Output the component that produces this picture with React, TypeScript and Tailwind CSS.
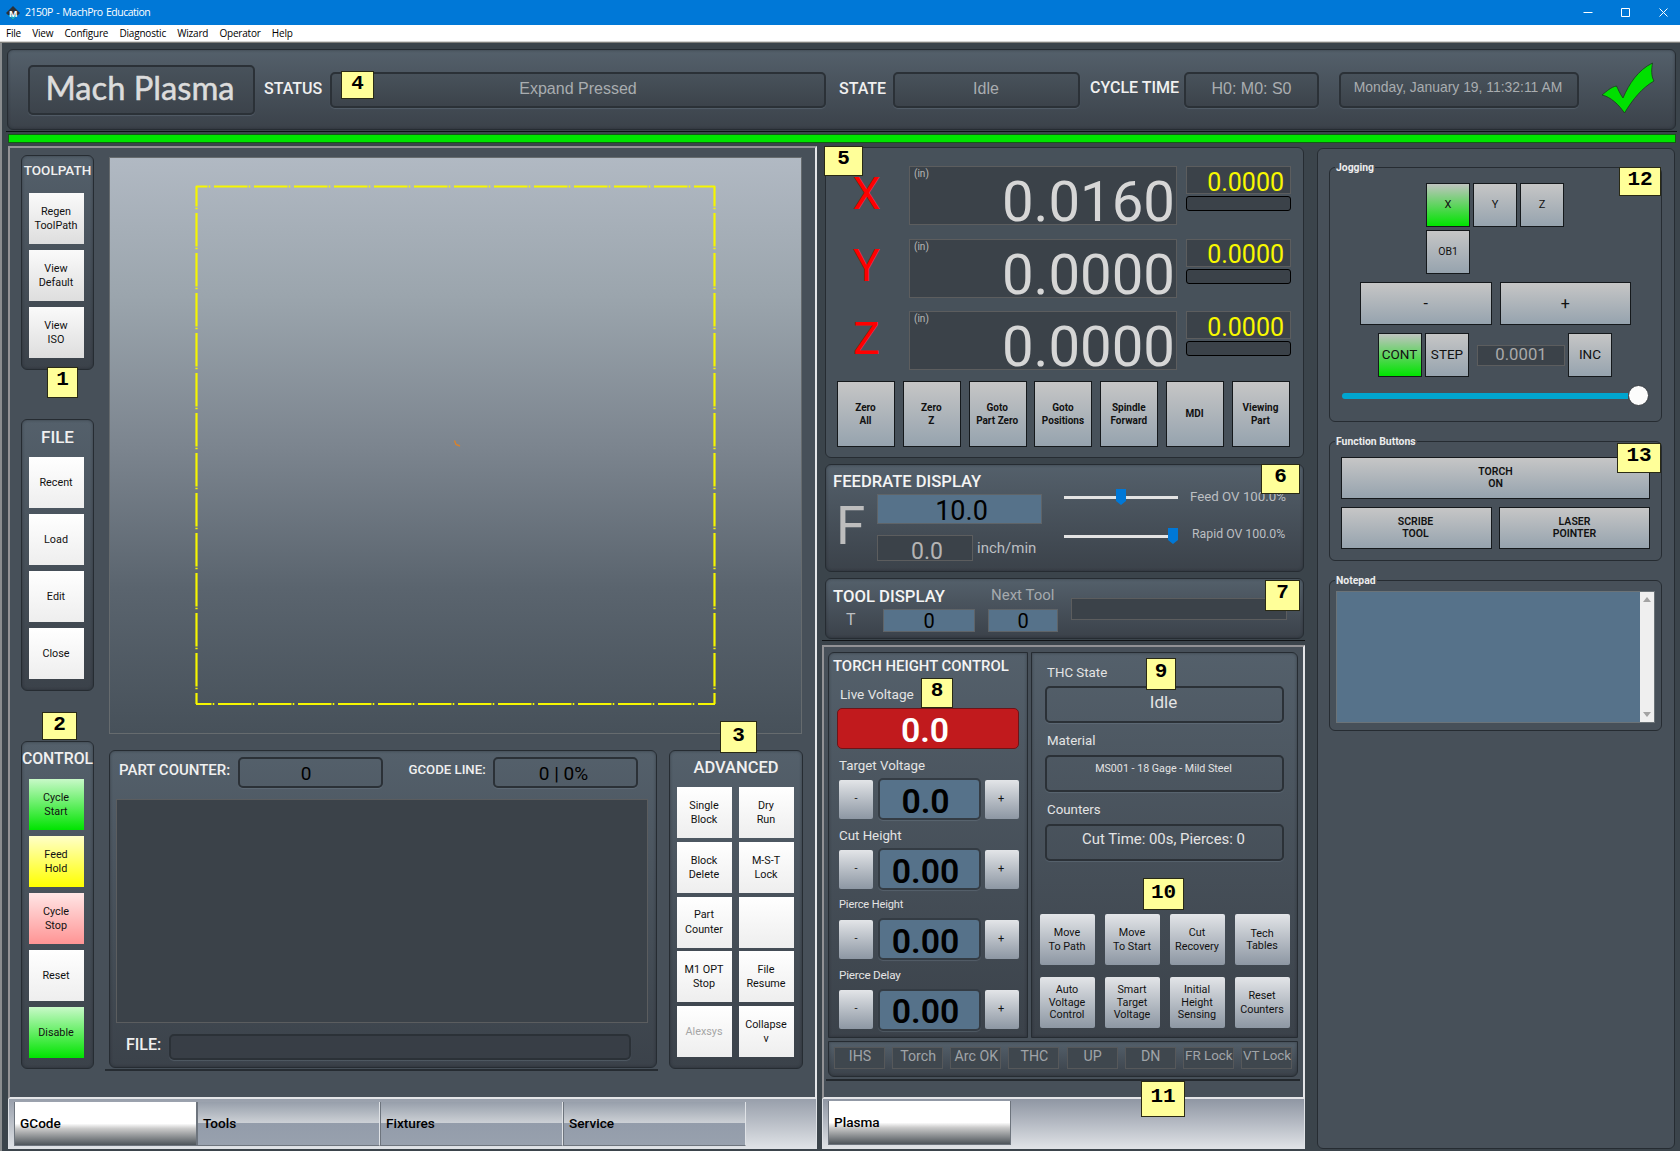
import type { ReactNode } from "react";
import clsx from "clsx";

const PANEL =
    "rounded-md border border-[#262c32] bg-gradient-to-b from-[#54606b] to-[#3b424a] shadow-[inset_0_0_3px_rgba(20,25,30,0.45)]";
const FIELD =
    "flex items-center justify-center rounded-[5px] border-2 border-[#2b3137] shadow-[0_1px_1px_rgba(120,135,150,0.35)]";
const SUNKEN = "flex items-center justify-center border border-[#5c5d5e] bg-[#3b4249]";
const STEEL = "bg-gradient-to-b from-[#c6c6c6] to-[#96a3ae] border border-[#15191c]";
const GREEN = "bg-[linear-gradient(#c0c4c0,#00e400)] border border-[#15191c]";
const SILVER = "rounded-[2px] bg-gradient-to-b from-[#e3e5e8] to-[#8d97a3]";
const READOUT = "h-9 bg-gradient-to-b from-[#48525b] to-[#3c434b] pb-[2px] font-['Liberation_Sans'] font-normal text-[#a9adb0]";

const BADGES = [
    { label: "1", pos: "left-[47px] top-[367px] w-[31px] h-[31px]" },
    { label: "2", pos: "left-[42px] top-[712px] w-[35px] h-[28px]" },
    { label: "3", pos: "left-[720px] top-[721px] w-[37px] h-[32px] pt-[2px]" },
    { label: "4", pos: "left-[341px] top-[71px] w-[33px] h-[28px]" },
    { label: "5", pos: "left-[824px] top-[146px] w-[39px] h-[30px]" },
    { label: "6", pos: "left-[1261px] top-[464px] w-[39px] h-[30px]" },
    { label: "7", pos: "left-[1265px] top-[580px] w-[35px] h-[31px]" },
    { label: "8", pos: "left-[921px] top-[678px] w-[32px] h-[30px]" },
    { label: "9", pos: "left-[1146px] top-[658px] w-[30px] h-[32px] pt-px" },
    { label: "10", pos: "left-[1143px] top-[878px] w-[41px] h-[32px] pt-[2px]" },
    { label: "11", pos: "left-[1141px] top-[1081px] w-[44px] h-[36px] pt-[3px]" },
    { label: "12", pos: "left-[1619px] top-[167px] w-[42px] h-[29px]" },
    { label: "13", pos: "left-[1617px] top-[443px] w-[44px] h-[30px]" },
];

const AXES = [
    { axis: "X", value: "0.0160" },
    { axis: "Y", value: "0.0000" },
    { axis: "Z", value: "0.0000" },
];

const DRO_BUTTONS = ["Zero\nAll", "Zero\nZ", "Goto\nPart Zero", "Goto\nPositions", "Spindle\nForward", "MDI", "Viewing\nPart"];

const ADVANCED = [
    "Single\nBlock",
    "Dry\nRun",
    "Block\nDelete",
    "M-S-T\nLock",
    "Part\nCounter",
    "",
    "M1 OPT\nStop",
    "File\nResume",
    "Alexsys",
    "Collapse\nv",
];

const THC_ROWS = [
    { label: "Target Voltage", value: "0.0", size: "pt-[7px] pb-[2px] text-[13.3px]" },
    { label: "Cut Height", value: "0.00", size: "pt-[7px] pb-[2px] text-[13.3px]" },
    { label: "Pierce Height", value: "0.00", size: "pt-[6px] pb-[3px] text-[11px] tracking-[-0.1px]" },
    { label: "Pierce Delay", value: "0.00", size: "pt-[5px] pb-1 text-[11.7px] tracking-[-0.2px]" },
];

const THC_BUTTONS = [
    "Move\nTo Path",
    "Move\nTo Start",
    "Cut\nRecovery",
    "Tech\nTables",
    "Auto\nVoltage\nControl",
    "Smart\nTarget\nVoltage",
    "Initial\nHeight\nSensing",
    "Reset\nCounters",
];

const LEDS = ["IHS", "Torch", "Arc OK", "THC", "UP", "DN", "FR Lock", "VT Lock"];

function Button({ label, className }: { label: string; className?: string }) {
    return (
        <button className={clsx("flex shrink-0 items-center justify-center whitespace-pre text-center text-[#111]", className)}>
            {label}
        </button>
    );
}

function SideButton({ label, className }: { label: string; className: string }) {
    return <Button label={label} className={clsx("h-[51px] w-[55px] pt-px pr-px text-[10.8px] leading-[14.2px]", className)} />;
}

function Tab({ label, active }: { label: string; active?: boolean }) {
    return (
        <div
            className={clsx(
                "flex h-11 w-[183px] shrink-0 items-center border-x border-b border-[#6d747d] pb-px pl-[5px] text-[13.6px] font-medium text-black",
                active
                    ? "bg-[linear-gradient(#fff_0%,#fff_50%,#c9c9c9_62%,#4e555b_100%)]"
                    : "border-r-[#dfe2e6] bg-[linear-gradient(#979fab_0%,#cdd1d6_49%,#939caa_50%,#98a1ae_100%)]",
            )}
        >
            {label}
        </div>
    );
}

function Group({ title, className, children }: { title: string; className: string; children: ReactNode }) {
    return (
        <section className={clsx("ml-[11px] w-[333px] rounded-md border border-[#262c32]", className)}>
            <h3 className="-mt-2 ml-[5px] h-[15px] w-fit bg-[#475059] px-px text-[10.4px] leading-[15px] font-bold text-[#ececec]">
                {title}
            </h3>
            {children}
        </section>
    );
}

function Header() {
    return (
        <header className={clsx(PANEL, "ml-[7px] flex h-[81px] w-[1669px] pt-[15px] pl-5")}>
            <div
                className={clsx(
                    FIELD,
                    "h-[50px] w-[227px] bg-gradient-to-b from-[#48525b] to-[#3c434b] pr-[3px] pb-[3px] font-['Lato'] text-[32.7px] leading-none text-[#dcdcdc] [-webkit-text-stroke:0.5px_#dcdcdc]",
                )}
            >
                Mach Plasma
            </div>
            <div className="mt-[7px] ml-[9px] flex h-9 items-center text-[16px] leading-none font-medium text-[#f0f0f0]">
                <span className="w-[66px] pb-[2px]">STATUS</span>
                <div className={clsx(FIELD, READOUT, "w-[496px]")}>Expand Pressed</div>
                <span className="ml-[13px] w-[54px] pb-[2px]">STATE</span>
                <div className={clsx(FIELD, READOUT, "w-[187px] pr-px")}>Idle</div>
                <span className="ml-[10px] w-[94px] pb-[4px]">CYCLE TIME</span>
                <div className={clsx(FIELD, READOUT, "w-[135px]")}>H0: M0: S0</div>
                <div className={clsx(FIELD, READOUT, "ml-5 w-60 pr-[2px] pb-[5px]! text-[13.9px]")}>Monday, January 19, 11:32:11 AM</div>
            </div>
            <svg className="-mt-[3px] ml-[22px]" width="56" height="52" viewBox="0 0 56 52">
                <path
                    d="M1 33 C6 29 10 25 15.500 24 C17 27 19 32 22 36 C28 22 37 8 51.500 1 C50.500 7 50 14 53 19 C41 26 32 37 23.500 51 C18 43 10 35 1 33Z"
                    fill="#00e000"
                    stroke="#1b3a20"
                    strokeWidth=".8"
                />
            </svg>
        </header>
    );
}

function Toolpath() {
    return (
        <div className="h-[577px] w-[693px] border border-[#666b6e] bg-[linear-gradient(#b1b9c3_0%,#9ba5ad_24%,#7c858f_50%,#5a646e_75%,#47515a_100%)]">
            <svg width="691" height="575" stroke="#f6f600" strokeWidth="2.200" fill="none">
                <path d="M86 28.500H605" strokeDasharray="33.500 1.200 1.600 3.700" strokeDashoffset="22" />
                <path d="M86 546H605" strokeDasharray="33.500 1.200 1.600 3.700" strokeDashoffset="18" />
                <path d="M86.500 28V546" strokeDasharray="33.500 1.200 1.600 3.700" strokeDashoffset="13" />
                <path d="M604.500 28V546" strokeDasharray="33.500 1.200 1.600 3.700" strokeDashoffset="13" />
                <path d="M344.500 282.500l1.500 4l4 1.500" stroke="#d9822b" strokeWidth="1.400" />
            </svg>
        </div>
    );
}

function LeftPane() {
    return (
        <div className="ml-2 w-[809px]">
            <div className="flex h-[953px] border-2 border-t-[#929295] border-r-[#e4e5e8] border-b-[#e4e5e8] border-l-[#929295] bg-[#475059] pl-[11px]">
                <div className="flex w-[73px] flex-col pt-[7px] text-center">
                    <section className={clsx(PANEL, "h-[215px]")}>
                        <h2 className="flex h-[29px] items-center justify-center text-[13.5px] font-medium text-[#f0f0f0]">TOOLPATH</h2>
                        <div className="mt-2 ml-[7px] flex flex-col gap-[6px]">
                            {["Regen\nToolPath", "View\nDefault", "View\nISO"].map((l) => (
                                <SideButton key={l} label={l} className="bg-gradient-to-b from-[#fafafa] to-[#dedede]" />
                            ))}
                        </div>
                    </section>
                    <section className={clsx(PANEL, "mt-[49px] h-[272px]")}>
                        <h2 className="flex h-[36px] items-center justify-center text-[17px] font-medium text-[#f0f0f0]">FILE</h2>
                        <div className="mt-px ml-[7px] flex flex-col gap-[6px]">
                            {["Recent", "Load", "Edit", "Close"].map((l) => (
                                <SideButton key={l} label={l} className="bg-gradient-to-b from-white to-[#eeeeee]" />
                            ))}
                        </div>
                    </section>
                    <section className={clsx(PANEL, "mt-[50px] h-[328px]")}>
                        <h2 className="flex h-[34px] items-center justify-center text-[15.8px] font-medium text-[#f0f0f0]">CONTROL</h2>
                        <div className="mt-[3px] ml-[7px] flex flex-col gap-[6px]">
                            <SideButton label={"Cycle\nStart"} className="bg-[linear-gradient(#c8f9c8,#00e400)]" />
                            <SideButton label={"Feed\nHold"} className="bg-[linear-gradient(#ffffc8,#ffff00)]" />
                            <SideButton label={"Cycle\nStop"} className="bg-[linear-gradient(#ffe6e6,#ff9494)]" />
                            <SideButton label="Reset" className="bg-gradient-to-b from-white to-[#eeeeee]" />
                            <SideButton label="Disable" className="bg-[linear-gradient(#c8f9c8,#00e400)]" />
                        </div>
                    </section>
                </div>

                <div className="ml-[15px] flex flex-col pt-[9px]">
                    <Toolpath />
                    <div className="mt-4 flex gap-[11px]">
                        <div>
                            <section className={clsx(PANEL, "h-[318px] w-[548px] pt-[6px]")}>
                                <div className="flex h-[31px] pl-[9px] font-medium text-[#f0f0f0]">
                                    <span className="w-[118.5px] pt-1 text-[15px] leading-[19px]">PART COUNTER:</span>
                                    <div className={clsx(FIELD, "w-[145px] pt-[3px] pr-2 text-[19px] font-normal text-black")}>0</div>
                                    <span className="ml-[26px] w-[84.5px] pt-[3px] text-[13.2px] leading-[19px]">GCODE LINE:</span>
                                    <div className={clsx(FIELD, "w-[145px] pt-[3px] pr-1 text-[19px] font-normal text-black")}>0 | 0%</div>
                                </div>
                                <div className="mt-[11px] ml-[6px] h-56 w-[532px] border border-[#5b5d5f] bg-[#3b4249]" />
                                <div className="mt-[11px] flex h-[26px] pl-4">
                                    <span className="w-[43px] pt-px text-[16px] leading-5 font-medium text-[#f0f0f0]">FILE:</span>
                                    <div className={clsx(FIELD, "w-[462px] bg-[#383e46]")} />
                                </div>
                            </section>
                            <div className="mt-px -ml-1 h-[2px] w-[553px] bg-[#262c32]" />
                        </div>
                        <section className={clsx(PANEL, "h-[319px] w-[134px]")}>
                            <h2 className="flex h-[34px] items-center justify-center text-[16.5px] font-medium text-[#f0f0f0]">ADVANCED</h2>
                            <div className="mt-[2px] ml-[7px] grid w-fit grid-cols-2 gap-x-[7px] gap-y-[3.8px]">
                                {ADVANCED.map((l, i) => (
                                    <SideButton
                                        key={i}
                                        label={l}
                                        className={clsx("bg-gradient-to-b from-white to-[#eeeeee]", l === "Alexsys" && "text-[#a5a5a5]!")}
                                    />
                                ))}
                            </div>
                        </section>
                    </div>
                </div>
            </div>
            <div className="flex h-[50px] border-x border-b border-[#dfe2e6] bg-gradient-to-b from-[#989fab] to-[#dfe2e6] pt-[3px] pl-[5px]">
                <Tab label="GCode" active />
                <Tab label="Tools" />
                <Tab label="Fixtures" />
                <Tab label="Service" />
            </div>
        </div>
    );
}

function Dro() {
    return (
        <section className="mt-px ml-[3px] h-[311px] w-[479px] rounded-md border border-[#262c32] bg-[#47515a] pt-[18px]">
            <div className="flex flex-col gap-[13.5px]">
                {AXES.map(({ axis, value }) => (
                    <div key={axis} className="flex h-[59px]">
                        <span className="flex w-[83px] items-center justify-center pr-[2px] pb-[5px] text-[45px] leading-none text-[#ff0000]">
                            {axis}
                        </span>
                        <div className="flex h-[59px] w-[268px] justify-between border border-[#5c5d5e] bg-[#3b4249] pr-[1px] pl-[4px]">
                            <span className="text-[10px] leading-[13px] text-[#b8b8b8]">(in)</span>
                            <span className="pt-[6px] text-[56.3px] leading-[58px] text-[#d6d6d6]">{value}</span>
                        </div>
                        <div className="ml-[9px] flex w-[105px] flex-col gap-[2px]">
                            <div className="flex h-7 items-center justify-end border border-[#5c5d5e] bg-[#3b4249] pt-1 pr-[6px] text-[25px] leading-none text-[#f8f800]">
                                0.0000
                            </div>
                            <div className="h-[15px] rounded-[3px] border border-black bg-[#3b4249]" />
                        </div>
                    </div>
                ))}
            </div>
            <div className="mt-[11px] ml-[11px] flex w-[453px] justify-between">
                {DRO_BUTTONS.map((l) => (
                    <Button key={l} label={l} className={clsx(STEEL, "h-[66px] w-[58px] pt-px pr-px text-[10px] leading-[12.5px] font-bold")} />
                ))}
            </div>
        </section>
    );
}

function OverrideSlider({ percent }: { percent: number }) {
    return (
        <div className="flex h-4 w-[114px] items-center">
            <div className="h-[3px] bg-[#e3e3e3]" style={{ width: `${percent}%` }} />
            <svg width="10" height="16" className="shrink-0">
                <path d="M0 0H10V12L5 16L0 12Z" fill="#0078d7" />
            </svg>
            <div className="h-[3px] flex-1 bg-[#e3e3e3]" />
        </div>
    );
}

function Feedrate() {
    return (
        <section className={clsx(PANEL, "mt-[6px] ml-[3px] flex h-[108px] w-[479px] pl-[7px]")}>
            <div className="w-[210px]">
                <h2 className="flex h-[29px] items-end pb-[2px] text-[16.6px] leading-[20px] font-medium whitespace-nowrap text-[#f4f4f4]">
                    FEEDRATE DISPLAY
                </h2>
                <div className="flex">
                    <span className="w-[44px] pt-[6px] pl-[3px] text-[53px] leading-[53px] text-[#bdbdbd]">F</span>
                    <div>
                        <div className="flex h-[30px] w-[165px] items-center justify-center border border-[#5f6468] bg-[#56728a] pt-[5px] pl-1 text-[27px] leading-none text-black">
                            10.0
                        </div>
                        <div className="mt-[11px] flex">
                            <div className={clsx(SUNKEN, "h-[26px] w-24 pt-[6px] pl-1 text-[23px] leading-none text-[#b4b4b4]")}>0.0</div>
                            <span className="ml-1 pt-[3px] text-[15px] leading-5 text-[#bcbfc2]">inch/min</span>
                        </div>
                    </div>
                </div>
            </div>
            <div className="ml-[21px] flex w-[114px] flex-col gap-[23px] pt-6">
                <OverrideSlider percent={46} />
                <OverrideSlider percent={91.3} />
            </div>
            <div className="ml-[12px] flex flex-col pt-6 leading-4 whitespace-nowrap text-[#bcbfc2]">
                <span className="text-[13.3px]">Feed OV 100.0%</span>
                <span className="mt-[21px] pl-[2px] text-[12.3px]">Rapid OV 100.0%</span>
            </div>
        </section>
    );
}

function ToolDisplay() {
    return (
        <section className={clsx(PANEL, "mt-[6px] ml-[3px] flex h-[61px] w-[479px] pl-[7px]")}>
            <div className="w-[155px]">
                <h2 className="pt-[8px] text-[16.7px] leading-5 font-medium whitespace-nowrap text-[#f4f4f4]">TOOL DISPLAY</h2>
                <div className="flex pt-[2px]">
                    <span className="w-[50px] pt-px pl-[13px] text-[16px] leading-5 text-[#bcbfc2]">T</span>
                    <div className="flex h-[23px] w-[92px] items-center justify-center border border-[#5f6468] bg-[#56728a] pt-px text-[20px] leading-none text-black">
                        0
                    </div>
                </div>
            </div>
            <div className="w-[83px]">
                <div className="pt-[6px] pl-[3px] text-[15px] leading-5 text-[#a5aaae]">Next Tool</div>
                <div className="mt-1 flex h-[23px] w-[70px] items-center justify-center border border-[#5f6468] bg-[#56728a] pt-px text-[20px] leading-none text-black">
                    0
                </div>
            </div>
            <div className={clsx(SUNKEN, "mt-[19px] h-[22px] w-[216px]")} />
        </section>
    );
}

function PlasmaPane() {
    return (
        <>
            <div className="mt-1 h-[454px] w-[483px] border-2 border-t-[#929295] border-r-[#e4e5e8] border-b-[#e4e5e8] border-l-[#929295] bg-[#475059] pt-[5px] pl-1">
                <div className="flex gap-[3px]">
                    <section className={clsx(PANEL, "h-[386px] w-[200px] rounded-r-none rounded-bl-none")}>
                        <h2 className="pt-[3px] pl-1 text-[14.9px] leading-5 font-medium whitespace-nowrap text-[#f4f4f4]">TORCH HEIGHT CONTROL</h2>
                        <div className="mt-[9px] pl-[11px] text-[13.6px] leading-[18px] text-[#e4e4e4]">Live Voltage</div>
                        <div className="mt-[5px] ml-2 flex h-[41px] w-[182px] items-center justify-center rounded-[5px] border border-[#6e1418] bg-[#c11a1d] pt-[5px] pr-[6px] text-[33.8px] leading-none font-semibold text-white">
                            0.0
                        </div>
                        {THC_ROWS.map(({ label, value, size }) => (
                            <div key={label} className="h-[70.2px] pl-[10px]">
                                <div className={clsx("leading-[20px] text-[#e4e4e4]", size)}>{label}</div>
                                <div className="flex w-[180px] items-center justify-between">
                                    <Button label="-" className={clsx(SILVER, "h-[39px] w-[34px] text-[11px]")} />
                                    <div className="flex h-[42px] w-[103px] items-center justify-center rounded-[5px] border-2 border-[#343c44] bg-[#56728a] pt-[5px] pr-[7px] text-[33.8px] leading-none font-semibold text-black shadow-[0_1px_1px_rgba(120,135,150,0.35)]">
                                        {value}
                                    </div>
                                    <Button label="+" className={clsx(SILVER, "h-[39px] w-[34px] pr-[2px] text-[11px]")} />
                                </div>
                            </div>
                        ))}
                    </section>
                    <section className={clsx(PANEL, "h-[386px] w-[267px] rounded-l-none rounded-br-none text-[#e4e4e4]")}>
                        <div className="pt-[10px] pl-[15px] text-[13.3px] leading-5">THC State</div>
                        <div className={clsx(FIELD, "mt-[3px] ml-[13px] h-[37px] w-[239px] pr-[2px] pb-[3px] text-[17px]")}>Idle</div>
                        <div className="pt-2 pl-[15px] text-[13.3px] leading-5">Material</div>
                        <div className={clsx(FIELD, "mt-1 ml-[13px] h-[37px] w-[239px] pr-[2px] pb-[9px] text-[10.7px]")}>MS001 - 18 Gage - Mild Steel</div>
                        <div className="pt-2 pl-[15px] text-[13.3px] leading-5">Counters</div>
                        <div className={clsx(FIELD, "mt-1 ml-[13px] h-[37px] w-[239px] pr-[2px] pb-[6px] text-[14.9px]")}>Cut Time: 00s, Pierces: 0</div>
                        <div className="mt-[53px] ml-2 grid w-[250px] grid-cols-[repeat(4,55px)] justify-between gap-y-3">
                            {THC_BUTTONS.map((l) => (
                                <Button
                                    key={l}
                                    label={l}
                                    className={clsx(
                                        SILVER,
                                        "h-[51px] pt-px pr-px text-[10.8px]",
                                        l.split("\n").length > 2 || l.startsWith("Tech") ? "leading-[12.5px]" : "leading-[14px]",
                                    )}
                                />
                            ))}
                        </div>
                    </section>
                </div>
                <div className={clsx(PANEL, "mt-[3px] flex h-9 w-[470px] justify-between rounded-t-none px-[5px] pt-[5px]")}>
                    {LEDS.map((l) => (
                        <div
                            key={l}
                            className={clsx(
                                "flex h-[22px] w-[51px] items-center justify-center border border-[#56585a] bg-[#3f474e] pl-px leading-none whitespace-nowrap text-[#a0a4a8]",
                                l.endsWith("Lock") ? "pb-1 text-[13.4px]" : "pb-[3px] text-[14.2px]",
                            )}
                        >
                            {l}
                        </div>
                    ))}
                </div>
                <div className="mt-[2px] -ml-[2px] h-[2px] w-[474px] bg-[#23282d]" />
            </div>
            <div className="flex h-[50px] w-[483px] border-x border-b border-[#dfe2e6] bg-gradient-to-b from-[#8f96a3] to-[#dfe2e6] pt-[2px] pl-[5px]">
                <Tab label="Plasma" active />
            </div>
        </>
    );
}

function RightPane() {
    return (
        <aside className="mt-[2px] ml-[12px] h-[1001px] w-[358px] rounded-md border border-[#262c32] bg-[#475059] pt-[18px]">
            <Group title="Jogging" className="h-[255px]">
                <div className="mt-[8px] ml-[96px] grid w-[138px] grid-cols-[repeat(3,44px)] gap-x-[3px] gap-y-[3px]">
                    <Button label="X" className={clsx(GREEN, "h-11 text-[11px]")} />
                    <Button label="Y" className={clsx(STEEL, "h-11 text-[11px]")} />
                    <Button label="Z" className={clsx(STEEL, "h-11 text-[11px]")} />
                    <Button label="OB1" className={clsx(STEEL, "h-11 text-[10.5px]")} />
                </div>
                <div className="mt-2 ml-[30px] flex gap-2">
                    <Button label="-" className={clsx(STEEL, "h-[43px] w-[131.5px] text-[16px]")} />
                    <Button label="+" className={clsx(STEEL, "h-[43px] w-[131.5px] text-[16px]")} />
                </div>
                <div className="mt-2 ml-12 flex items-center">
                    <Button label="CONT" className={clsx(GREEN, "h-11 w-11 pr-px pb-[2px] text-[13.5px]")} />
                    <Button label="STEP" className={clsx(STEEL, "ml-[3px] h-11 w-11 pb-[2px] text-[13.5px]")} />
                    <div className={clsx(SUNKEN, "ml-2 h-[21px] w-[88px] text-[16.7px] leading-none text-[#a9a9a9]")}>0.0001</div>
                    <Button label="INC" className={clsx(STEEL, "ml-[3px] h-11 w-11 pb-[2px] text-[13.5px]")} />
                </div>
                <div className="mt-2 ml-3 flex h-[21px] items-center">
                    <div className="h-[6px] w-[286px] rounded-l-full bg-[#00a5cf]" />
                    <div className="h-[21px] w-[21px] rounded-full border border-[#3a3f44] bg-[#fcfcfc]" />
                </div>
            </Group>
            <Group title="Function Buttons" className="mt-[19px] h-[120px]">
                <div className="mt-[8px] ml-[11px] flex w-[309px] flex-wrap justify-between gap-y-2">
                    <Button label={"TORCH\nON"} className={clsx(STEEL, "h-[42px] w-[309px] text-[10.5px] leading-[12.5px] font-semibold")} />
                    <Button label={"SCRIBE\nTOOL"} className={clsx(STEEL, "h-[42px] w-[151px] pr-[2px] text-[10.5px] leading-[12.5px] font-semibold")} />
                    <Button label={"LASER\nPOINTER"} className={clsx(STEEL, "h-[42px] w-[151px] text-[10.5px] leading-[12.5px] font-semibold")} />
                </div>
            </Group>
            <Group title="Notepad" className="mt-[19px] h-[151px]">
                <div className="mt-[3px] ml-[6px] flex h-[132px] w-[319px] justify-end border border-[#6b7378] bg-[#56728a]">
                    <div className="flex w-[14px] flex-col items-center justify-between bg-[#efefef] py-[5px]">
                        <svg width="8" height="5" fill="#a3a3a3">
                            <path d="M0 5L4 0L8 5Z" />
                        </svg>
                        <svg width="8" height="5" fill="#a3a3a3">
                            <path d="M0 0H8L4 5Z" />
                        </svg>
                    </div>
                </div>
            </Group>
        </aside>
    );
}

export default function App() {
    return (
        <div className="relative flex h-[1151px] w-[1680px] flex-col overflow-hidden bg-[#3b444b] font-['Roboto',sans-serif]">
            {/* Window chrome */}
            <div className="flex h-[25px] items-center bg-[#0078d7] pl-[6px] font-['Open_Sans',sans-serif] text-[10.5px] tracking-[-0.48px] text-white">
                <svg width="14" height="14" viewBox="0 0 14 14">
                    <path d="M7 0L14 7L7 14L0 7Z" fill="#2b3138" />
                    <path d="M2 9L7 14L12 9Z" fill="#12a5c4" />
                    <text x="7" y="10.500" textAnchor="middle" fontSize="9" fontWeight="700" fill="#fff">
                        M
                    </text>
                </svg>
                <span className="ml-[5px] [word-spacing:1px]">2150P - MachPro Education</span>
                <svg className="ml-auto" width="100" height="25" stroke="#fff" fill="none">
                    <path d="M3.500 12.500H12.500" />
                    <path d="M41.500 8.500H49.500V16.500H41.500Z" />
                    <path d="M79.500 8.500L87.500 16.500M87.500 8.500L79.500 16.500" />
                </svg>
            </div>
            <nav className="flex h-4 items-center gap-[11.2px] bg-white pl-[6px] font-['Open_Sans',sans-serif] text-[10px] tracking-[-0.2px] text-black">
                {["File", "View", "Configure", "Diagnostic", "Wizard", "Operator", "Help"].map((item) => (
                    <span key={item}>{item}</span>
                ))}
            </nav>
            <div className="h-[2px] shrink-0 border-b border-[#7f7f7c] bg-[#d5d5d3]" />

            <div className="flex-1 border-l-2 border-[#8a8d8f] pt-[6px]">
                <div className="-ml-[2px]">
                    <Header />
                    <div className="mt-px ml-[6px] h-[1px] w-[1671px] bg-[#0e1113]" />
                    <div className="mt-[2px] ml-2 h-[9px] w-[1668px] border border-[#145b14] bg-[#00e400]" />
                    <main className="mt-[3px] flex">
                        <LeftPane />
                        <div className="ml-[5px] w-[483px]">
                            <Dro />
                            <Feedrate />
                            <ToolDisplay />
                            <div className="mt-px h-px bg-[#111416]" />
                            <PlasmaPane />
                        </div>
                        <RightPane />
                    </main>
                </div>
            </div>

            {/* Callout markers */}
            {BADGES.map(({ label, pos }) => (
                <div
                    key={label}
                    className={clsx(
                        "absolute flex items-start justify-center border border-[#2a2a14] bg-[#ffff99] font-['Liberation_Mono',monospace] text-[21px] leading-[23px] font-bold text-black",
                        pos,
                    )}
                >
                    {label}
                </div>
            ))}
        </div>
    );
}
